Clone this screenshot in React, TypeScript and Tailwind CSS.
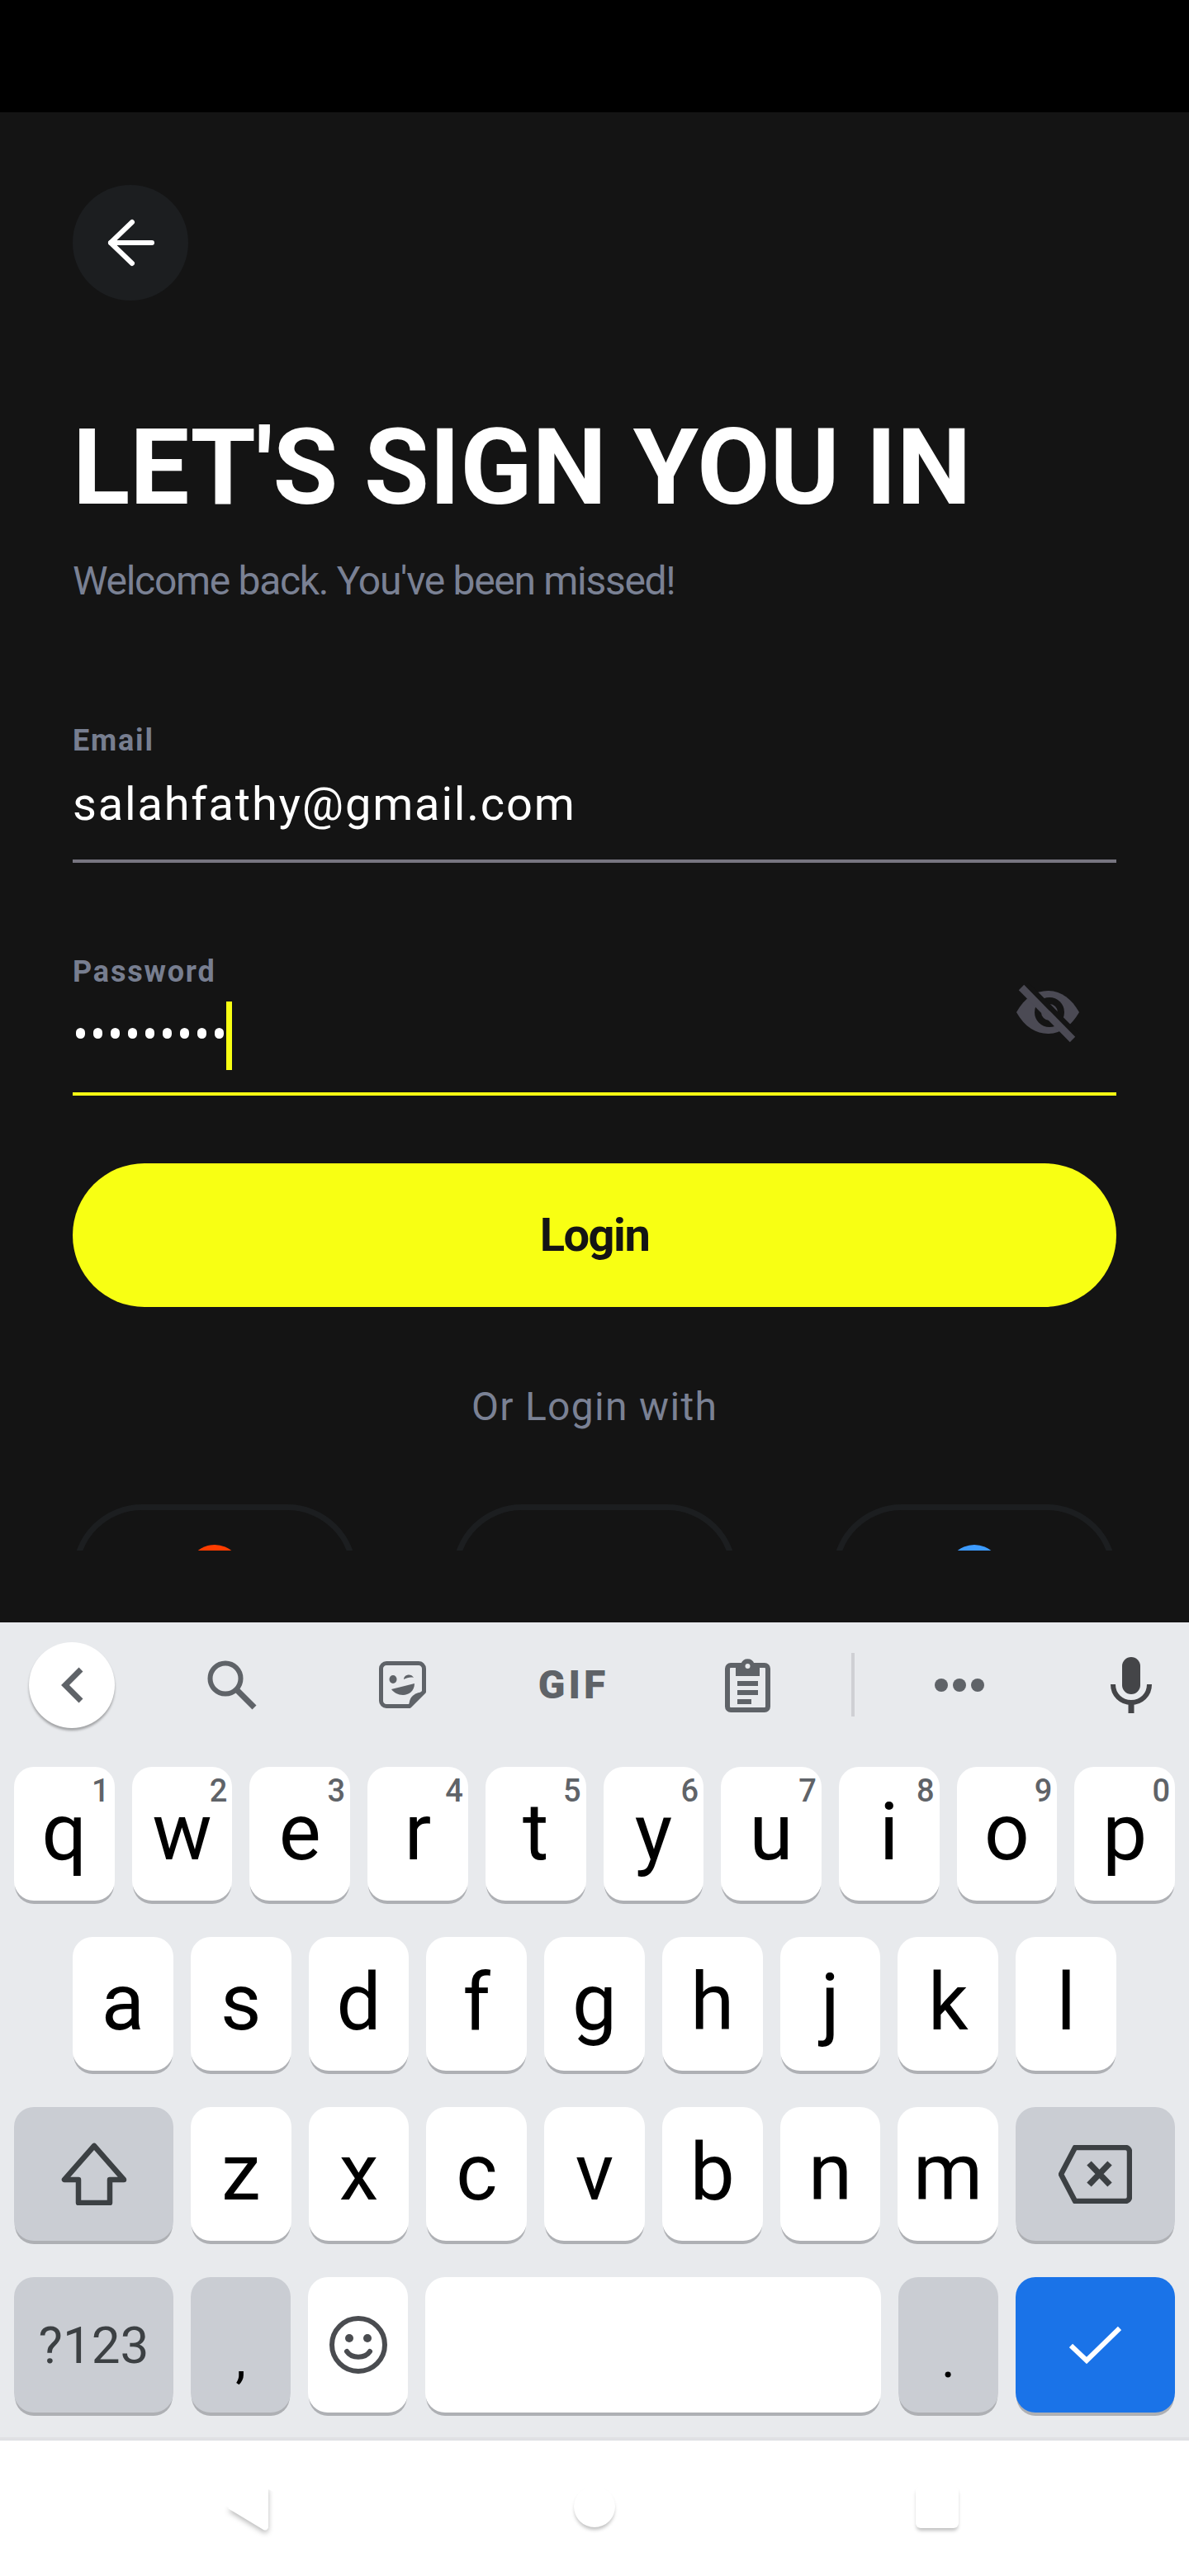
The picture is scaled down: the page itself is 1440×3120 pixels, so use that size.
import { ReactNode } from 'react';

const topRow = [
  ['q', '1'],
  ['w', '2'],
  ['e', '3'],
  ['r', '4'],
  ['t', '5'],
  ['y', '6'],
  ['u', '7'],
  ['i', '8'],
  ['o', '9'],
  ['p', '0'],
];
const midRow = ['a', 's', 'd', 'f', 'g', 'h', 'j', 'k', 'l'];
const lowRow = ['z', 'x', 'c', 'v', 'b', 'n', 'm'];

function Key({ label, hint }: { label: string; hint?: string }) {
  return (
    <div className="relative flex h-[162px] flex-1 justify-center rounded-[24px] bg-white pt-[23px] text-[96px] leading-[112px] text-black shadow-[0_5px_0_-1px_#aeb0b4]">
      {label}
      {hint && (
        <span className="absolute right-[6px] top-[7px] text-[38px] leading-[44px] font-medium text-[#5f6368]">
          {hint}
        </span>
      )}
    </div>
  );
}

function GreyKey({ className, children }: { className: string; children?: ReactNode }) {
  return (
    <div className={`flex items-center justify-center rounded-[24px] shadow-[0_5px_0_-1px_#aeb0b4] ${className}`}>
      {children}
    </div>
  );
}

function PunctKey({ label }: { label: string }) {
  return (
    <div className="flex h-[164px] flex-1 justify-center rounded-[24px] bg-[#cacdd3] pt-[30px] text-[64px] leading-[140px] text-black shadow-[0_5px_0_-1px_#aeb0b4]">
      {label}
    </div>
  );
}

function SocialButton({ dot }: { dot?: string }) {
  return (
    <div className="flex h-[170px] w-[344px] shrink-0 justify-center rounded-[84px] border-[7px] border-[#1c1e20] pt-[42px]">
      {dot && <div className={`h-[66px] w-[66px] rounded-full ${dot}`} />}
    </div>
  );
}

function ToolCell({ children, className }: { children: ReactNode; className: string }) {
  return <div className={`flex shrink-0 justify-center ${className}`}>{children}</div>;
}

export default function App() {
  return (
    <div className="flex h-[3120px] w-[1440px] flex-col overflow-hidden bg-[#141414] font-['Roboto',sans-serif]">
      <div className="h-[136px] shrink-0 bg-black" />

      <div className="h-[1742px] shrink-0 overflow-hidden px-[88px] pt-[88px]">
        <div className="flex h-[140px] w-[140px] items-center justify-center rounded-full bg-[#1c1e20]">
          <svg width="60" height="60" viewBox="0 0 60 60" fill="none" stroke="white" strokeWidth="6" strokeLinecap="round" strokeLinejoin="round">
            <path d="M56 30H6" />
            <path d="M32 5 6 30l26 25" />
          </svg>
        </div>

        <h1 className="mt-[127px] text-[128px] leading-[150px] font-bold whitespace-nowrap text-white">
          LET'S SIGN YOU IN
        </h1>
        <p className="mt-[35px] text-[48px] leading-[56px] tracking-[-1.3px] text-[#7a8194]">
          Welcome back. You've been missed!
        </p>

        <div className="mt-[144px] border-b-[4px] border-[#777580] pb-[34px]">
          <div className="text-[36px] leading-[42px] font-bold tracking-[1.8px] text-[#777e90]">Email</div>
          <div className="mt-[23px] text-[56px] leading-[66px] tracking-[1.8px] text-white">
            salahfathy@gmail.com
          </div>
        </div>

        <div className="relative mt-[111px] h-[171px] border-b-[4px] border-[#f8ff13]">
          <div className="text-[36px] leading-[42px] font-bold tracking-[1.8px] text-[#777e90]">Password</div>
          <div className="mt-[15px] flex items-center">
            <div className="mb-[6px] flex gap-[10px] pl-[4px]">
              {Array.from({ length: 9 }).map((_, i) => (
                <span key={i} className="h-[13px] w-[11px] rounded-full bg-white" />
              ))}
            </div>
            <div className="ml-[3px] h-[83px] w-[7px] bg-[#f8ff13]" />
          </div>
          <svg className="absolute right-[22px] top-[12px]" width="130" height="110" viewBox="0 0 130 110">
            <path
              d="M31 58C41 40 55 32 69 32c16 0 29 10 38 26-9 16-22 26-38 26-14 0-28-8-38-26Z"
              fill="#4b4a54"
            />
            <circle cx="71" cy="58" r="18" fill="#141414" />
            <circle cx="71" cy="58" r="10" fill="#4b4a54" />
            <path d="M43 25 105 87" stroke="#141414" strokeWidth="8" />
            <path d="M37 28 99 91" stroke="#4b4a54" strokeWidth="9" />
          </svg>
        </div>

        <div className="mt-[82px] flex h-[174px] items-center justify-center rounded-[87px] bg-[#f8ff13] text-[56px] font-bold tracking-[-1.5px] text-[#141414]">
          Login
        </div>

        <div className="mt-[93px] text-center text-[48px] leading-[56px] tracking-[1.3px] text-[#7a8194]">
          Or Login with
        </div>

        <div className="mt-[90px] flex justify-between">
          <SocialButton dot="bg-[#ff3d00]" />
          <SocialButton />
          <SocialButton dot="bg-[#3d9bff]" />
        </div>
      </div>

      <div className="h-[87px] shrink-0" />

      <div className="h-[991px] shrink-0 border-b-[4px] border-[#e0e1e4] bg-[#e8eaed]">
        <div className="flex h-[175px] items-center pb-[24px] text-[#5f6368]">
          <div className="ml-[35px] flex h-[104px] w-[104px] shrink-0 items-center justify-center rounded-full bg-white shadow-[0_3px_3px_rgba(0,0,0,0.3)]">
            <svg width="40" height="50" viewBox="0 0 40 50" fill="none" stroke="#5f6368" strokeWidth="7">
              <path d="M31 6 12 25l19 19" />
            </svg>
          </div>
          <ToolCell className="ml-[38px] w-[207px]">
            <svg width="60" height="60" viewBox="0 0 60 60" fill="none" stroke="currentColor">
              <circle cx="22" cy="22" r="18.500" strokeWidth="6" />
              <path d="M35 35 57 57" strokeWidth="7" />
            </svg>
          </ToolCell>
          <ToolCell className="w-[207px]">
            <svg width="57" height="57" viewBox="0 0 57 57" fill="none">
              <path d="M9 2.500H48a6.500 6.500 0 0 1 6.500 6.500V37L37 54.500H9A6.500 6.500 0 0 1 2.500 48V9A6.500 6.500 0 0 1 9 2.500Z" stroke="currentColor" strokeWidth="5" strokeLinejoin="round" />
              <path d="M57 37 37 57c-2-10 2-20 20-20Z" fill="currentColor" />
              <ellipse cx="17" cy="22" rx="4.500" ry="5" fill="currentColor" />
              <path d="M30 22c0-6 9-8 12-2-4-1-8 0-12 2Z" fill="currentColor" />
              <path d="M15 34 43 27c0 9-7 14-14 14-6 0-11-3-14-7Z" fill="currentColor" />
            </svg>
          </ToolCell>
          <ToolCell className="w-[207px]">
            <span className="text-[48px] leading-none font-black tracking-[4px]">GIF</span>
          </ToolCell>
          <ToolCell className="ml-[4px] w-[207px]">
            <svg width="55" height="66" viewBox="0 0 55 66" fill="none">
              <rect x="3" y="9" width="49" height="54" rx="4" stroke="currentColor" strokeWidth="6" />
              <path d="M13 7h6.500a8.500 8.500 0 0 1 16 0H42v15H13Z" fill="currentColor" />
              <circle cx="27.500" cy="10" r="3" fill="#e8eaed" />
              <path d="M15 28h25v6H15ZM15 39h25v6H15ZM15 50h17v6H15Z" fill="currentColor" />
            </svg>
          </ToolCell>
          <div className="ml-[22px] h-[77px] w-[4px] shrink-0 bg-[#cfd0d4]" />
          <ToolCell className="ml-[23px] w-[207px]">
            <div className="flex gap-[6px]">
              <span className="h-[16px] w-[16px] rounded-full bg-[#5f6368]" />
              <span className="h-[16px] w-[16px] rounded-full bg-[#5f6368]" />
              <span className="h-[16px] w-[16px] rounded-full bg-[#5f6368]" />
            </div>
          </ToolCell>
          <ToolCell className="ml-[35px] w-[140px]">
            <svg width="50" height="68" viewBox="0 0 50 68" fill="none" stroke="#444548">
              <rect x="14" y="0" width="22" height="45" rx="11" fill="#444548" stroke="none" />
              <path d="M3 33c0 13 10 22 22 22s22-9 22-22" strokeWidth="6" />
              <path d="M25 53v15" strokeWidth="7" />
            </svg>
          </ToolCell>
        </div>

        <div className="flex flex-col gap-[44px]">
          <div className="flex gap-[21px] px-[17px]">
            {topRow.map(([l, h]) => (
              <Key key={l} label={l} hint={h} />
            ))}
          </div>
          <div className="flex gap-[21px] px-[88px]">
            {midRow.map((l) => (
              <Key key={l} label={l} />
            ))}
          </div>
          <div className="flex gap-[21px] px-[17px]">
            <GreyKey className="h-[162px] w-[193px] bg-[#cacdd3]">
              <svg width="80" height="76" viewBox="0 0 80 76" fill="none" stroke="#3c4043" strokeWidth="6.500" strokeLinejoin="round">
                <path d="M40 4 4 45h17v28h38V45h17Z" />
              </svg>
            </GreyKey>
            {lowRow.map((l) => (
              <Key key={l} label={l} />
            ))}
            <GreyKey className="h-[162px] w-[193px] bg-[#cacdd3]">
              <svg width="89" height="71" viewBox="0 0 89 71" fill="none" stroke="#3c4043" strokeWidth="6.500" strokeLinejoin="round">
                <path d="M20 3h61a5 5 0 0 1 5 5v55a5 5 0 0 1-5 5H20L3 35.500Z" />
                <path d="m37 22 25 26m0-26L37 48" strokeWidth="7.500" />
              </svg>
            </GreyKey>
          </div>
          <div className="flex gap-[21px] px-[17px]">
            <GreyKey className="h-[164px] w-[193px] bg-[#cacdd3] text-[62px] text-[#3c4043]">?123</GreyKey>
            <PunctKey label="," />
            <GreyKey className="h-[164px] flex-1 bg-white">
              <svg width="72" height="72" viewBox="0 0 72 72" fill="none" stroke="#4a4c50" strokeWidth="6">
                <circle cx="36" cy="36" r="32" />
                <circle cx="25" cy="28" r="5" fill="#4a4c50" stroke="none" />
                <circle cx="47" cy="28" r="5" fill="#4a4c50" stroke="none" />
                <path d="M22 44c6 9 22 9 28 0" strokeLinecap="round" />
              </svg>
            </GreyKey>
            <GreyKey className="h-[164px] w-[552px] bg-white" />
            <PunctKey label="." />
            <GreyKey className="h-[164px] w-[193px] bg-[#1a73e8]">
              <svg width="63" height="46" viewBox="0 0 63 46" fill="none" stroke="white" strokeWidth="6">
                <path d="M2 24 21 42 61 3" />
              </svg>
            </GreyKey>
          </div>
        </div>
      </div>

      <div className="flex flex-1 items-start bg-white pt-[55px]">
        <svg className="ml-[275px] shrink-0 overflow-visible" width="50" height="56" viewBox="0 0 50 56">
          <path className="drop-shadow-[0_3px_3px_rgba(0,0,0,0.28)]" d="M50 0V50a4 4 0 0 1-6 3L1 27Z" fill="white" />
          <path d="M-8 -8H58V8L50 4V30L2 26-8 20Z" fill="white" />
        </svg>
        <div className="ml-[370px] h-[50px] w-[50px] shrink-0 rounded-full bg-white shadow-[0_4px_4px_-1px_rgba(0,0,0,0.25)]" />
        <div className="ml-[364px] h-[51px] w-[52px] shrink-0 rounded-[6px] bg-white shadow-[0_4px_4px_-1px_rgba(0,0,0,0.25)]" />
      </div>
    </div>
  );
}
